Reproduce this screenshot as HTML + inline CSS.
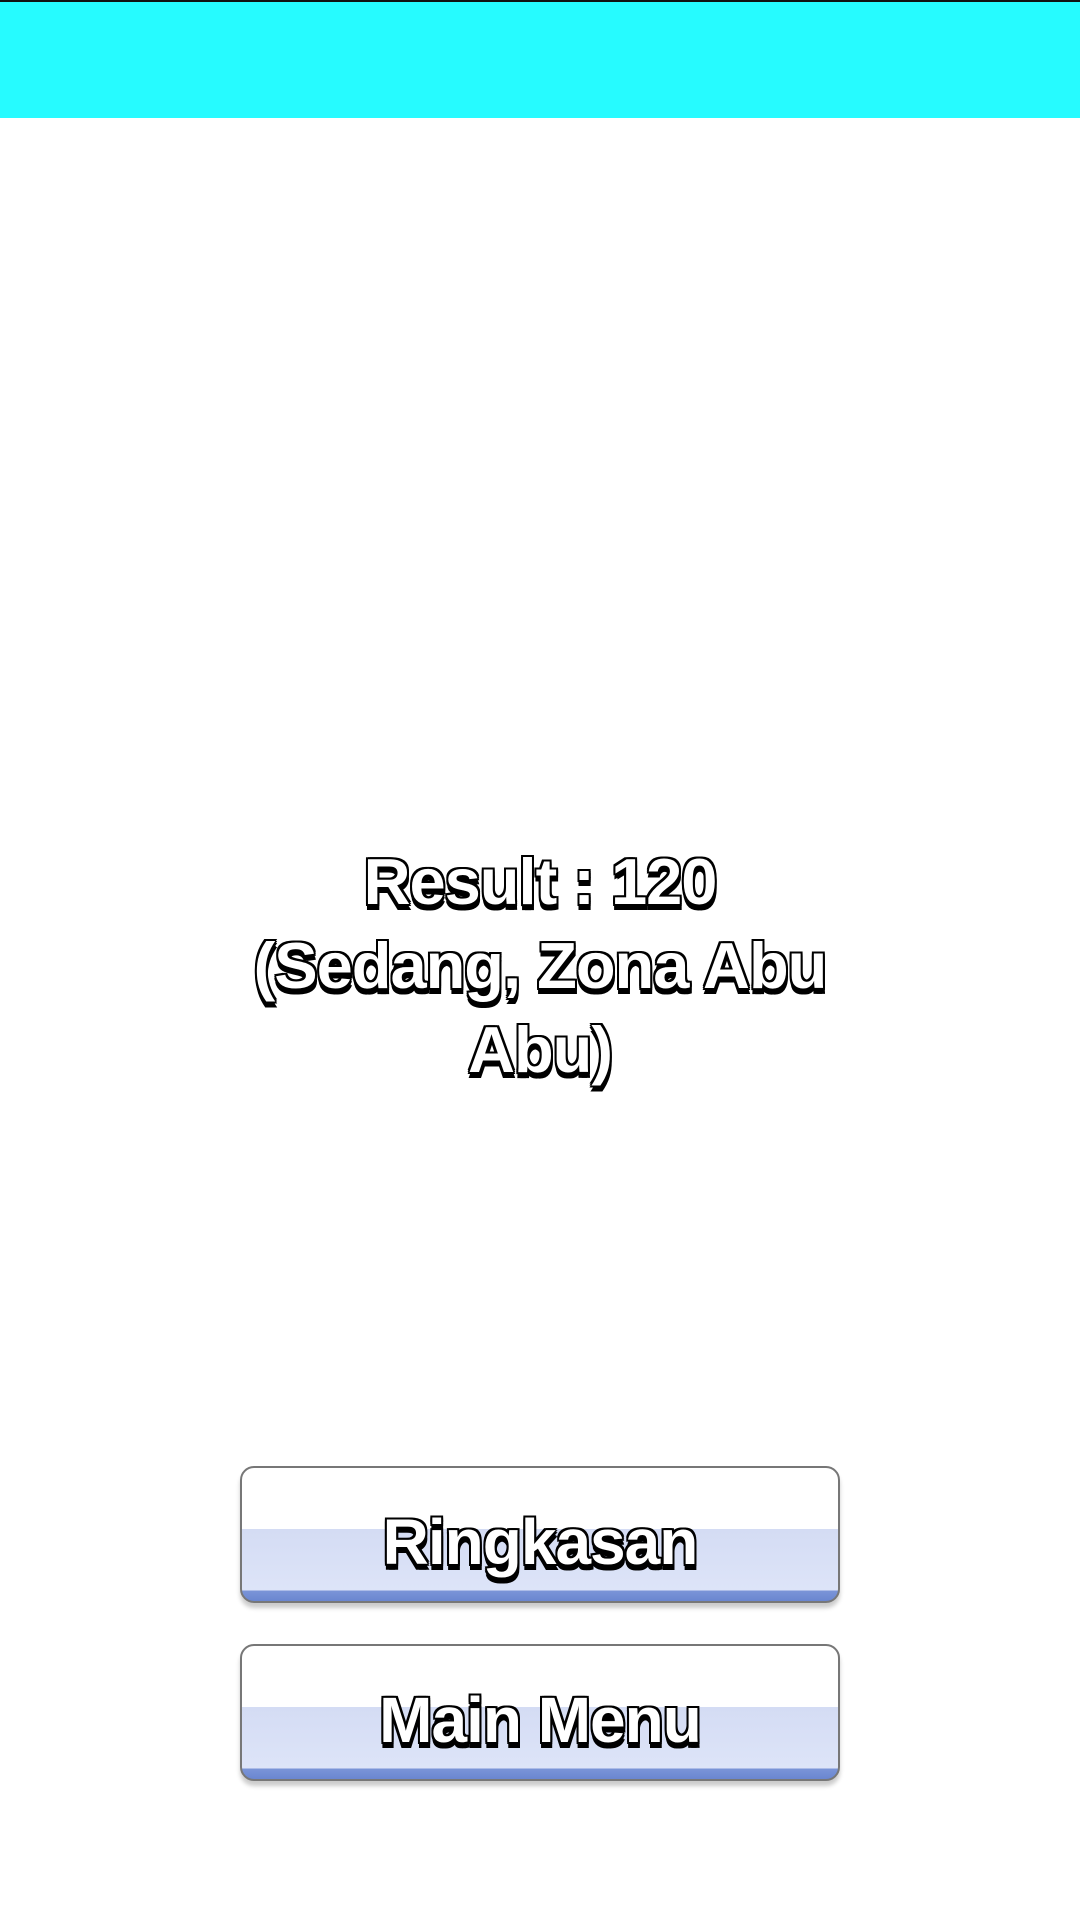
<!DOCTYPE html>
<html><head><style>
html,body{margin:0;padding:0;width:1080px;height:1920px;background:#fff;overflow:hidden;position:relative;font-family:"Liberation Sans",sans-serif}
.top{position:absolute;left:0;top:0;width:1080px;height:118px;background:#26fbff;border-top:2px solid #111;box-sizing:border-box}
.t{font-weight:bold;color:#fff;letter-spacing:-1px;
text-shadow:-2px -2px 0 #000,2px -2px 0 #000,-2px 2px 0 #000,2px 2px 0 #000,0 -2px 0 #000,0 2px 0 #000,-2px 0 0 #000,2px 0 0 #000,1px 5px 0 #000,2px 6px 0 #000,-1px 6px 0 #000}
.res{position:absolute;left:0;width:1080px;top:840px;text-align:center;font-size:65px;line-height:84px}
.btn{position:absolute;left:240px;width:600px;height:137px;border:2px solid #777;border-radius:14px;box-sizing:border-box;overflow:hidden;
background:linear-gradient(#fff 0,#fff 46%,#d4dcf4 46%,#dde4f8 92%,#7b95d8 92%,#6a86d0 100%);box-shadow:0 5px 4px #ccc}
.btn span{position:absolute;left:0;right:0;top:34px;text-align:center;font-size:64px;line-height:80px}
</style></head><body>
<div class="top"></div>
<div class="res t">Result : 120<br>(Sedang, Zona Abu<br>Abu)</div>
<div class="btn" style="top:1466px"><span class="t">Ringkasan</span></div>
<div class="btn" style="top:1644px"><span class="t">Main Menu</span></div>
</body></html>
